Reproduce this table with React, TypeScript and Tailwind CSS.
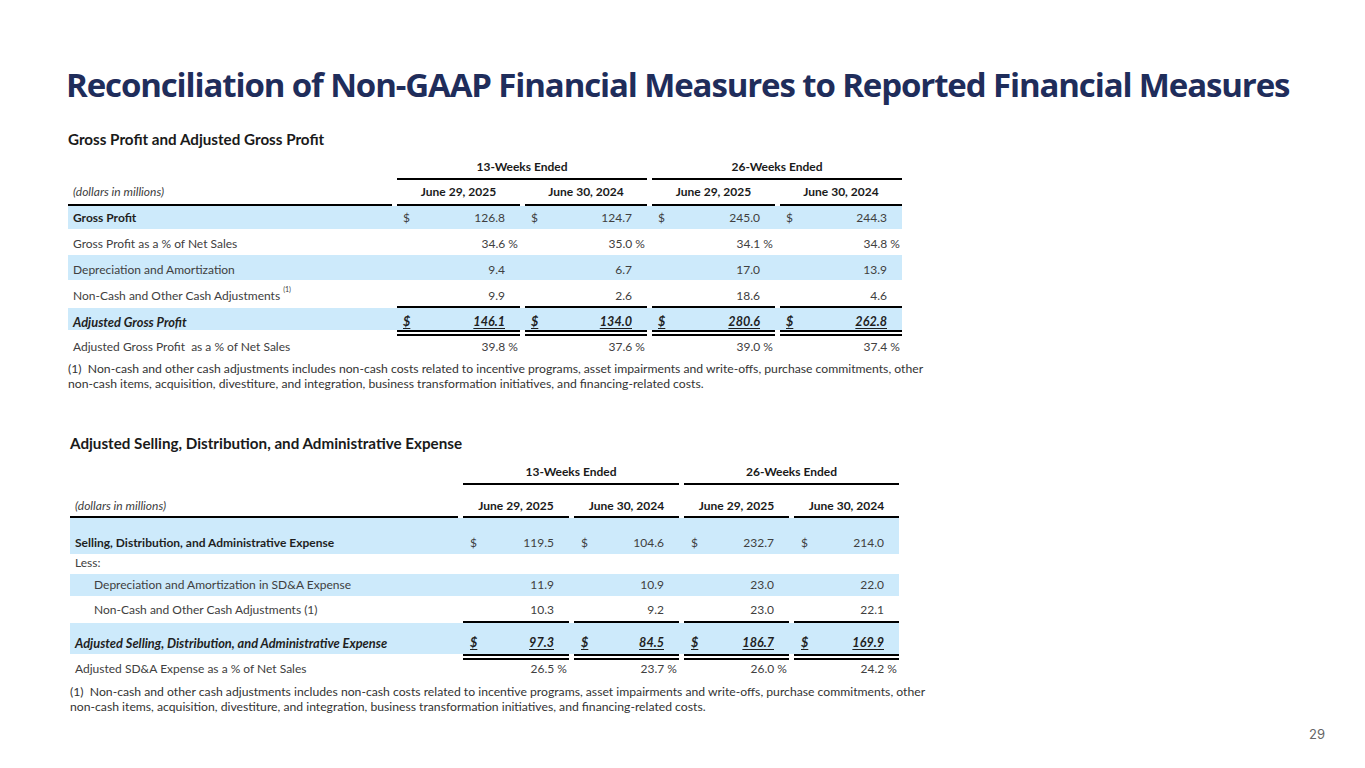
import React from 'react';

type Row = {
  label?: React.ReactNode;
  vals?: string[];
  kind: 'money' | 'pct' | 'num' | 'total' | 'text' | 'rule2';
  blue?: boolean;
  bold?: boolean;
  indent?: boolean;
  rule?: boolean;
  h: string; // row height
  pt: string; // text offset inside the row
};

type TableSpec = {
  title: string;
  wrap: string;
  grid: string;
  labelPad: string;
  indentPad: string;
  dollarPad: string;
  headA: string;
  headAPt: string;
  headB: string;
  headBPt: string;
  rows: Row[];
  footGap: string;
};

const FOOTNOTE = [
  '(1)  Non-cash and other cash adjustments includes non-cash costs related to incentive programs, asset impairments and write-offs, purchase commitments, other',
  'non-cash items, acquisition, divestiture, and integration, business transformation initiatives, and financing-related costs.',
];

const grossProfit: TableSpec = {
  title: 'Gross Profit and Adjusted Gross Profit',
  wrap: 'ml-[68px] mt-[24px]',
  grid: 'grid grid-cols-[324px_123px_122px_123px_122px] gap-x-[5px] w-[834px]',
  labelPad: 'pl-[5px]',
  indentPad: 'pl-[5px]',
  dollarPad: 'pl-[6px]',
  headA: 'h-[24px] mt-[7px]',
  headAPt: 'pt-[4px]',
  headB: 'h-[26px]',
  headBPt: 'pt-[5px]',
  footGap: 'mt-[3px]',
  rows: [
    { label: 'Gross Profit', kind: 'money', bold: true, blue: true, vals: ['126.8', '124.7', '245.0', '244.3'], h: 'h-[23px]', pt: 'pt-[5px]' },
    { label: 'Gross Profit as a % of Net Sales', kind: 'pct', vals: ['34.6', '35.0', '34.1', '34.8'], h: 'h-[26px]', pt: 'pt-[8px]' },
    { label: 'Depreciation and Amortization', kind: 'num', blue: true, vals: ['9.4', '6.7', '17.0', '13.9'], h: 'h-[25px]', pt: 'pt-[8px]' },
    {
      label: (
        <>
          Non-Cash and Other Cash Adjustments <sup className="text-[7px] align-super">(1)</sup>
        </>
      ),
      kind: 'num',
      rule: true,
      vals: ['9.9', '2.6', '18.6', '4.6'],
      h: 'h-[28px]',
      pt: 'pt-[9px]',
    },
    { label: 'Adjusted Gross Profit', kind: 'total', blue: true, vals: ['146.1', '134.0', '280.6', '262.8'], h: 'h-[22px]', pt: 'pt-[7px]' },
    { kind: 'rule2', h: 'h-[6px]', pt: '' },
    { label: 'Adjusted Gross Profit  as a % of Net Sales', kind: 'pct', vals: ['39.8', '37.6', '39.0', '37.4'], h: 'h-[22px]', pt: 'pt-[4px]' },
  ],
};

const sdaExpense: TableSpec = {
  title: 'Adjusted Selling, Distribution, and Administrative Expense',
  wrap: 'ml-[70px] mt-[42px]',
  grid: 'grid grid-cols-[388px_106px_105px_105px_105px] gap-x-[5px] w-[829px]',
  labelPad: 'pl-[5px]',
  indentPad: 'pl-[24px]',
  dollarPad: 'pl-[7px]',
  headA: 'h-[23px] mt-[9px]',
  headAPt: 'pt-[3px]',
  headB: 'h-[33px]',
  headBPt: 'pt-[14px]',
  footGap: 'mt-[3px]',
  rows: [
    { label: 'Selling, Distribution, and Administrative Expense', kind: 'money', bold: true, blue: true, vals: ['119.5', '104.6', '232.7', '214.0'], h: 'h-[36px]', pt: 'pt-[18px]' },
    { label: 'Less:', kind: 'text', h: 'h-[20px]', pt: 'pt-[2px]' },
    { label: 'Depreciation and Amortization in SD&A Expense', kind: 'num', blue: true, indent: true, vals: ['11.9', '10.9', '23.0', '22.0'], h: 'h-[22px]', pt: 'pt-[4px]' },
    { label: 'Non-Cash and Other Cash Adjustments (1)', kind: 'num', indent: true, rule: true, vals: ['10.3', '9.2', '23.0', '22.1'], h: 'h-[27px]', pt: 'pt-[7px]' },
    { label: 'Adjusted Selling, Distribution, and Administrative Expense', kind: 'total', blue: true, vals: ['97.3', '84.5', '186.7', '169.9'], h: 'h-[31px]', pt: 'pt-[13px]' },
    { kind: 'rule2', h: 'h-[6px]', pt: '' },
    { label: 'Adjusted SD&A Expense as a % of Net Sales', kind: 'pct', vals: ['26.5', '23.7', '26.0', '24.2'], h: 'h-[21px]', pt: 'pt-[2px]' },
  ],
};

function DataCell({ row, v, t }: { row: Row; v: string; t: TableSpec }) {
  const edge = row.rule ? 'border-b-2 border-black' : '';
  if (row.kind === 'money') {
    return (
      <div className={`flex justify-between pr-[15px] ${t.dollarPad} ${row.pt} ${edge}`}>
        <span>$</span>
        <span>{v}</span>
      </div>
    );
  }
  if (row.kind === 'total') {
    return (
      <div className={`flex justify-between pr-[15px] text-[12.6px] font-bold italic text-[#1f1f1f] ${t.dollarPad} ${row.pt}`}>
        <span className="underline underline-offset-2">$</span>
        <span className="underline underline-offset-2">{v}</span>
      </div>
    );
  }
  if (row.kind === 'pct') {
    return <div className={`flex justify-end pr-[2px] ${row.pt} ${edge}`}>{v} %</div>;
  }
  return <div className={`flex justify-end pr-[15px] ${row.pt} ${edge}`}>{v}</div>;
}

function TableBlock({ t }: { t: TableSpec }) {
  return (
    <div className={`flex flex-col ${t.wrap}`}>
      <h2 className="text-[15.2px] leading-[20px] font-bold text-[#1a1a1a]">{t.title}</h2>

      {/* period headers */}
      <div className={`${t.grid} ${t.headA} font-bold text-[#1a1a1a]`}>
        <div />
        <div className={`col-span-2 border-b-2 border-black text-center ${t.headAPt}`}>13-Weeks Ended</div>
        <div className={`col-span-2 border-b-2 border-black text-center ${t.headAPt}`}>26-Weeks Ended</div>
      </div>
      <div className={`${t.grid} ${t.headB}`}>
        <div className={`border-b-2 border-black italic text-[#404040] ${t.labelPad} ${t.headBPt}`}>(dollars in millions)</div>
        {['June 29, 2025', 'June 30, 2024', 'June 29, 2025', 'June 30, 2024'].map((d, i) => (
          <div key={i} className={`border-b-2 border-black text-center font-bold text-[#1a1a1a] ${t.headBPt}`}>
            {d}
          </div>
        ))}
      </div>

      {/* body */}
      {t.rows.map((row, i) => {
        if (row.kind === 'rule2') {
          return (
            <div key={i} className={`${t.grid} ${row.h}`}>
              <div />
              {[0, 1, 2, 3].map((k) => (
                <div key={k} className="border-y-2 border-black" />
              ))}
            </div>
          );
        }
        const labelCls =
          row.kind === 'total' ? 'text-[12.8px] font-bold italic text-[#1f1f1f]' : row.bold ? 'font-bold text-[#1f1f1f]' : '';
        return (
          <div key={i} className={`${t.grid} ${row.h} ${row.blue ? 'bg-[#cdeafb]' : ''}`}>
            <div className={`${row.indent ? t.indentPad : t.labelPad} ${row.pt} ${labelCls} whitespace-pre`}>{row.label}</div>
            {row.vals?.map((v, k) => <DataCell key={k} row={row} v={v} t={t} />)}
          </div>
        );
      })}

      <div className={`${t.footGap} text-[12.2px] leading-[15px] text-[#333333] whitespace-nowrap`}>
        {FOOTNOTE.map((line) => (
          <div key={line} className="whitespace-pre">{line}</div>
        ))}
      </div>
    </div>
  );
}

export default function App() {
  return (
    <div className="w-[1365px] h-[768px] bg-white overflow-hidden flex flex-col font-['Lato',_'Liberation_Sans',_sans-serif] text-[12px] leading-[14px] text-[#404040]">
      <h1 className="ml-[66px] mt-[65px] h-[40px] text-[33px] leading-[40px] font-bold tracking-[-0.034em] text-[#1f2d5b] whitespace-nowrap font-['Open_Sans',_sans-serif]">
        Reconciliation of Non-GAAP Financial Measures to Reported Financial Measures
      </h1>
      <TableBlock t={grossProfit} />
      <TableBlock t={sdaExpense} />
      <div className="mt-auto mb-[26px] mr-[40px] self-end text-[13px] leading-[16px] text-[#666666] font-['Inter',_sans-serif]">29</div>
    </div>
  );
}
